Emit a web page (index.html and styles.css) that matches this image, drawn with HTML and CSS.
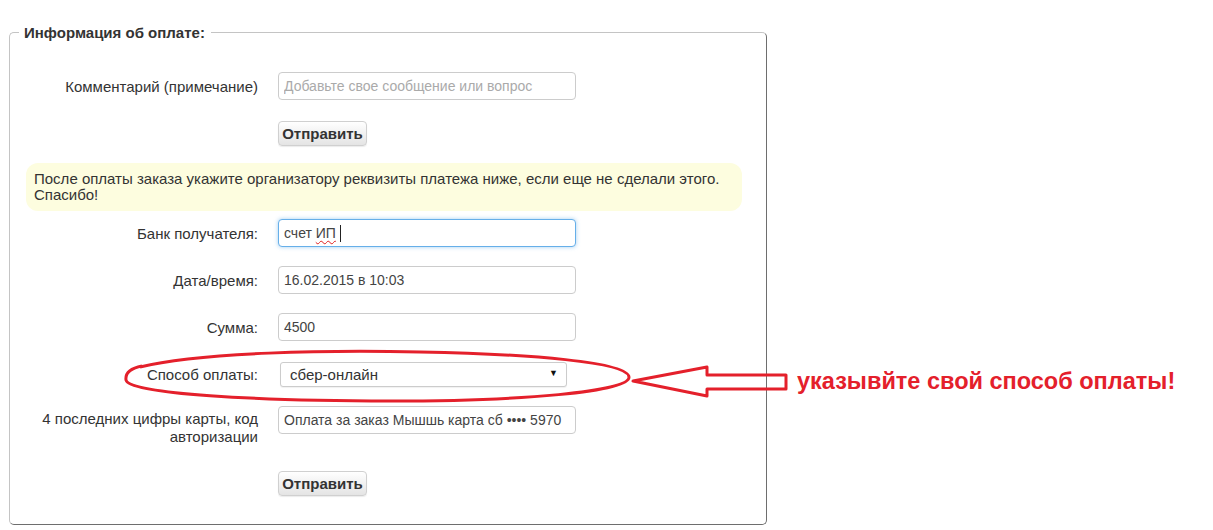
FILE: index.html
```html
<!DOCTYPE html>
<html lang="ru">

<head>
    <meta charset="UTF-8">
    <title>Информация об оплате</title>
    <link rel="stylesheet" href="styles.css">
</head>

<body>

    <fieldset class="payment">
        <legend>Информация об оплате:</legend>

        <div class="row">
            <label class="row-label" for="comment">Комментарий (примечание)</label>
            <input class="field" type="text" id="comment" placeholder="Добавьте свое сообщение или вопрос">
        </div>

        <div class="row row-btn first-btn">
            <span class="row-label"></span>
            <button class="btn">Отправить</button>
        </div>

        <div class="note">
            После оплаты заказа укажите организатору реквизиты платежа ниже, если еще не сделали этого.<br>
            Спасибо!
        </div>

        <div class="row bank">
            <label class="row-label">Банк получателя:</label>
            <div class="field focused">счет <span class="typo">ИП</span><span class="caret"></span></div>
        </div>

        <div class="row">
            <label class="row-label" for="date">Дата/время:</label>
            <input class="field" type="text" id="date" value="16.02.2015 в 10:03">
        </div>

        <div class="row">
            <label class="row-label" for="sum">Сумма:</label>
            <input class="field" type="text" id="sum" value="4500">
        </div>

        <div class="row method">
            <label class="row-label" for="method">Способ оплаты:</label>
            <div class="select-wrap">
                <select class="select" id="method">
                    <option>сбер-онлайн</option>
                </select>
            </div>
        </div>

        <div class="row row-top">
            <label class="row-label two-lines" for="card">4 последних цифры карты, код авторизации</label>
            <input class="field" type="text" id="card" value="Оплата за заказ Мышшь карта сб •••• 5970">
        </div>

        <div class="row row-btn last-btn">
            <span class="row-label"></span>
            <button class="btn">Отправить</button>
        </div>
    </fieldset>

    <!-- red marks drawn over the screenshot -->
    <svg class="marks" width="1213" height="530" viewBox="0 0 1213 530">
        <path d="M140 367 C 200 352, 330 350, 420 352 C 530 354, 628 362, 629 377 C 630 392, 520 401, 390 401 C 260 401, 128 394, 126 380 C 125 372, 132 368, 142 366"
            fill="none" stroke="#e4202b" stroke-width="3" />
        <path d="M633 381 L707 367 L707 375 L786 375 L786 389 L707 389 L707 396 Z"
            fill="none" stroke="#e4202b" stroke-width="3" stroke-linejoin="round" />
    </svg>
    <div class="mark-text">указывйте свой способ оплаты!</div>

</body>

</html>
```

FILE: styles.css
```css
body {
    font-family: "Liberation Sans", Arial, sans-serif;
    font-size: 15px;
    color: #333;
    background-color: #fff;
    margin: 0;
    padding: 0;
    position: relative;
    width: 1213px;
    height: 530px;
    overflow: hidden;
}

.payment {
    width: 758px;
    box-sizing: border-box;
    margin: 24px 0 0 9px;
    padding: 0 0 28px 20px;
    border: 1px solid;
    border-color: #c4c4c4 #6e6e6e #6e6e6e #c4c4c4;
    border-radius: 5px;
    min-width: 0;
}

.payment legend {
    font-weight: bold;
    font-size: 15px;
    color: #333;
    margin-left: -11px;
    padding: 0 6px 0 5px;
}

.row {
    display: flex;
    align-items: center;
    margin-top: 19px;
}

.payment .row:first-of-type {
    margin-top: 31px;
}

.row-top {
    align-items: flex-start;
}

.row-label {
    width: 228px;
    margin-right: 20px;
    text-align: right;
    flex-shrink: 0;
}

.two-lines {
    width: 228px;
    line-height: 18px;
    padding-top: 4px;
}

.field {
    width: 298px;
    height: 28px;
    box-sizing: border-box;
    border: 1px solid #ccc;
    border-radius: 4px;
    padding: 0 5px;
    font-family: inherit;
    font-size: 14px;
    color: #444;
    background-color: #fff;
    outline: none;
    margin: 0;
}

.field::placeholder {
    color: #aaa;
}

.focused {
    display: flex;
    align-items: center;
    border-color: #66afe9;
    box-shadow: 0 0 4px rgba(102, 175, 233, 0.6);
    white-space: pre;
}

.typo {
    text-decoration: underline wavy #e02020;
    text-decoration-thickness: 1px;
    text-underline-offset: 2px;
}

.caret {
    display: inline-block;
    width: 1px;
    height: 17px;
    background-color: #222;
    margin-left: 4px;
}

.bank {
    margin-top: 8px;
}

.method {
    margin-top: 21px;
}

.first-btn {
    margin-top: 21px;
}

.last-btn {
    margin-top: 25px;
}

.btn {
    width: 89px;
    height: 25px;
    font-family: inherit;
    font-size: 15px;
    font-weight: bold;
    color: #333;
    background: linear-gradient(#ffffff, #e4e4e4);
    border: 1px solid #d0d0d0;
    border-radius: 4px;
    box-shadow: 0 1px 1px rgba(0, 0, 0, 0.08);
    padding: 0;
    cursor: pointer;
}

.note {
    margin: 17px 24px 0 -4px;
    padding: 8px;
    line-height: 16px;
    background-color: #fdfddf;
    border-radius: 12px;
    color: #333;
}

.select-wrap {
    position: relative;
    margin-left: 2px;
}

.select {
    width: 287px;
    height: 25px;
    box-sizing: border-box;
    appearance: none;
    -webkit-appearance: none;
    border: 1px solid #ccc;
    border-radius: 3px;
    background-color: #fff;
    box-shadow: 0 1px 1px rgba(0, 0, 0, 0.06);
    padding: 0 9px;
    font-family: inherit;
    font-size: 15px;
    color: #333;
    outline: none;
}

.select-wrap::after {
    content: "▼";
    position: absolute;
    right: 9px;
    top: 6px;
    font-size: 9px;
    color: #111;
    pointer-events: none;
}

.marks {
    position: absolute;
    left: 0;
    top: 0;
    pointer-events: none;
}

.mark-text {
    position: absolute;
    left: 797px;
    top: 368px;
    font-size: 23.5px;
    font-weight: bold;
    color: #e4202b;
    white-space: nowrap;
}
```
